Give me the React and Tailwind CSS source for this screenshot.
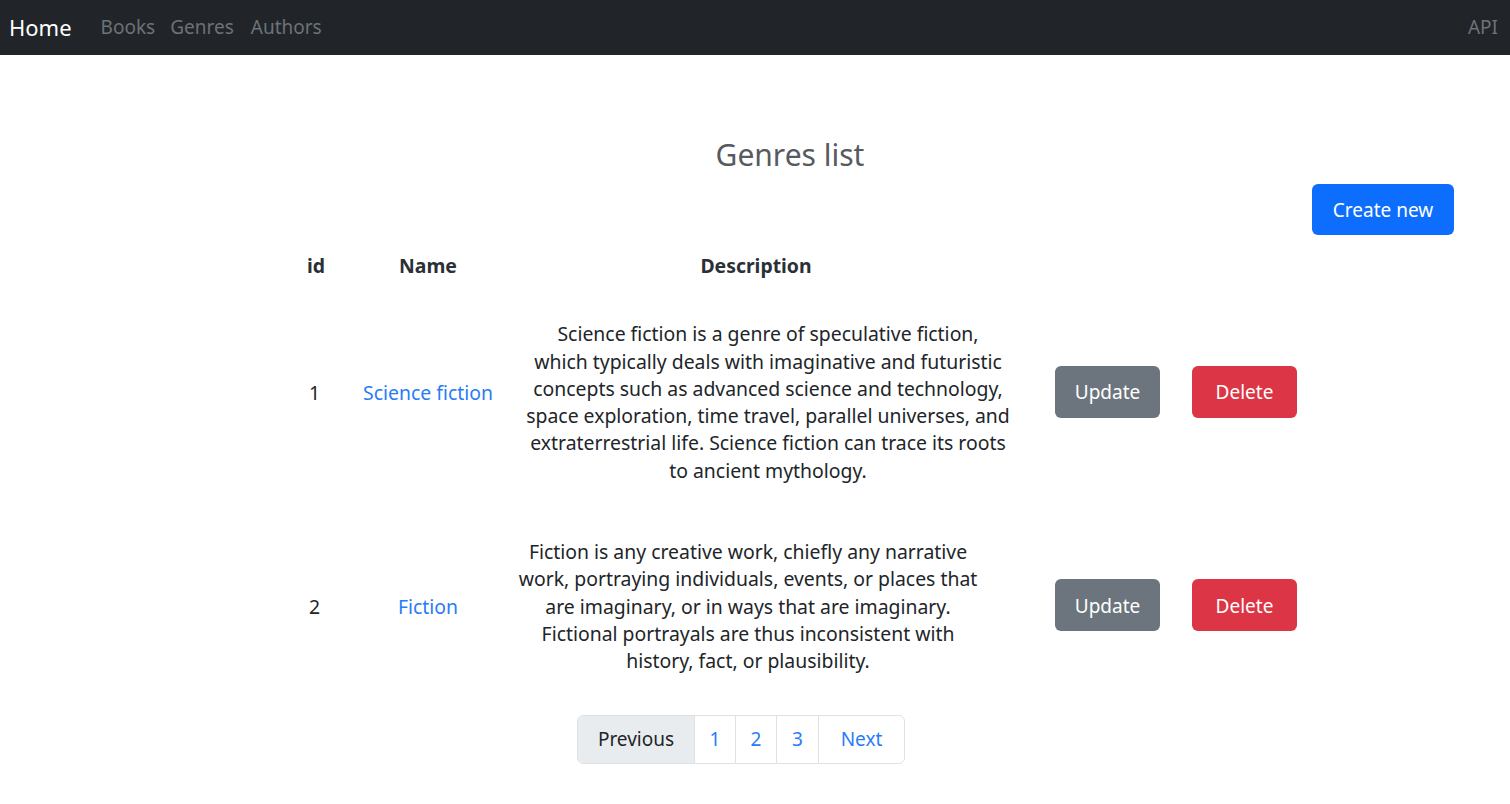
import React from 'react';

const font = { fontFamily: '"Noto Sans", "Open Sans", sans-serif' };

const genres = [
  {
    id: 1,
    name: 'Science fiction',
    lines: [
      'Science fiction is a genre of speculative fiction,',
      'which typically deals with imaginative and futuristic',
      'concepts such as advanced science and technology,',
      'space exploration, time travel, parallel universes, and',
      'extraterrestrial life. Science fiction can trace its roots',
      'to ancient mythology.',
    ],
    descCls: 'w-[504px] pt-[19px]',
    btnCls: 'ml-[35px]',
    rowCls: 'mt-[22px]',
  },
  {
    id: 2,
    name: 'Fiction',
    lines: [
      'Fiction is any creative work, chiefly any narrative',
      'work, portraying individuals, events, or places that',
      'are imaginary, or in ways that are imaginary.',
      'Fictional portrayals are thus inconsistent with',
      'history, fact, or plausibility.',
    ],
    descCls: 'w-[464px]',
    btnCls: 'ml-[75px]',
    rowCls: 'mt-[54px]',
  },
];

const Navbar = () => (
  <nav className="h-[55px] bg-[#212529] flex items-center px-[9px]">
    <a className="text-white text-[22px] mr-[29px]">Home</a>
    <a className="text-[#6c7278] text-[19px] mr-[15px]">Books</a>
    <a className="text-[#6c7278] text-[19px] mr-[17px]">Genres</a>
    <a className="text-[#6c7278] text-[19px]">Authors</a>
    <a className="text-[#6c7278] text-[19px] ml-auto mr-[3px]">API</a>
  </nav>
);

export default function App() {
  return (
    <div className="min-h-screen bg-white text-[#212529]" style={font}>
      <Navbar />
      <main className="pt-[81px]">
        <h3 className="text-center text-[30px] leading-[38px] text-[#555b61] pl-[70px]">Genres list</h3>
        <div className="flex justify-end pr-[56px] mt-[10px]">
          <button className="w-[142px] h-[51px] rounded-[6px] bg-[#0d6efd] text-white text-[19px] pt-[2px]">Create new</button>
        </div>

        <div className="ml-[290px] text-[19.4px] leading-[27.3px]">
          <div className="flex items-center mt-[17px] font-bold text-[#2b3036]">
            <div className="w-[50px] pl-[17px]">id</div>
            <div className="w-[176px] text-center">Name</div>
            <div className="w-[480px] text-center">Description</div>
          </div>

          {genres.map((g) => (
            <div key={g.id} className={`flex items-center ${g.rowCls}`}>
              <div className="w-[50px] pl-[19px]">{g.id}</div>
              <div className="w-[176px] text-center">
                <a className="text-[#2a7cf6]">{g.name}</a>
              </div>
              <div className={`text-center whitespace-nowrap ${g.descCls}`}>
                {g.lines.map((l, i) => (
                  <div key={i}>{l}</div>
                ))}
              </div>
              <div className={`flex gap-[32px] -mt-[2px] text-[19px] ${g.btnCls}`}>
                <button className="w-[105px] h-[52px] rounded-[6px] bg-[#6c757d] text-white pt-[2px]">Update</button>
                <button className="w-[105px] h-[52px] rounded-[6px] bg-[#dc3545] text-white pt-[2px]">Delete</button>
              </div>
            </div>
          ))}
        </div>

        <div className="flex justify-center mt-[40px] pr-[28px]">
          <ul className="flex h-[49px] text-[19px] border border-[#dee2e6] rounded-[6px] overflow-hidden">
            <li className="w-[116px] flex items-center justify-center bg-[#e9ecef] text-[#212529]">Previous</li>
            <li className="w-[41px] flex items-center justify-center border-l border-[#dee2e6] text-[#2a7cf6]">1</li>
            <li className="w-[41px] flex items-center justify-center border-l border-[#dee2e6] text-[#2a7cf6]">2</li>
            <li className="w-[42px] flex items-center justify-center border-l border-[#dee2e6] text-[#2a7cf6]">3</li>
            <li className="w-[86px] flex items-center justify-center border-l border-[#dee2e6] text-[#2a7cf6]">Next</li>
          </ul>
        </div>
      </main>
    </div>
  );
}
